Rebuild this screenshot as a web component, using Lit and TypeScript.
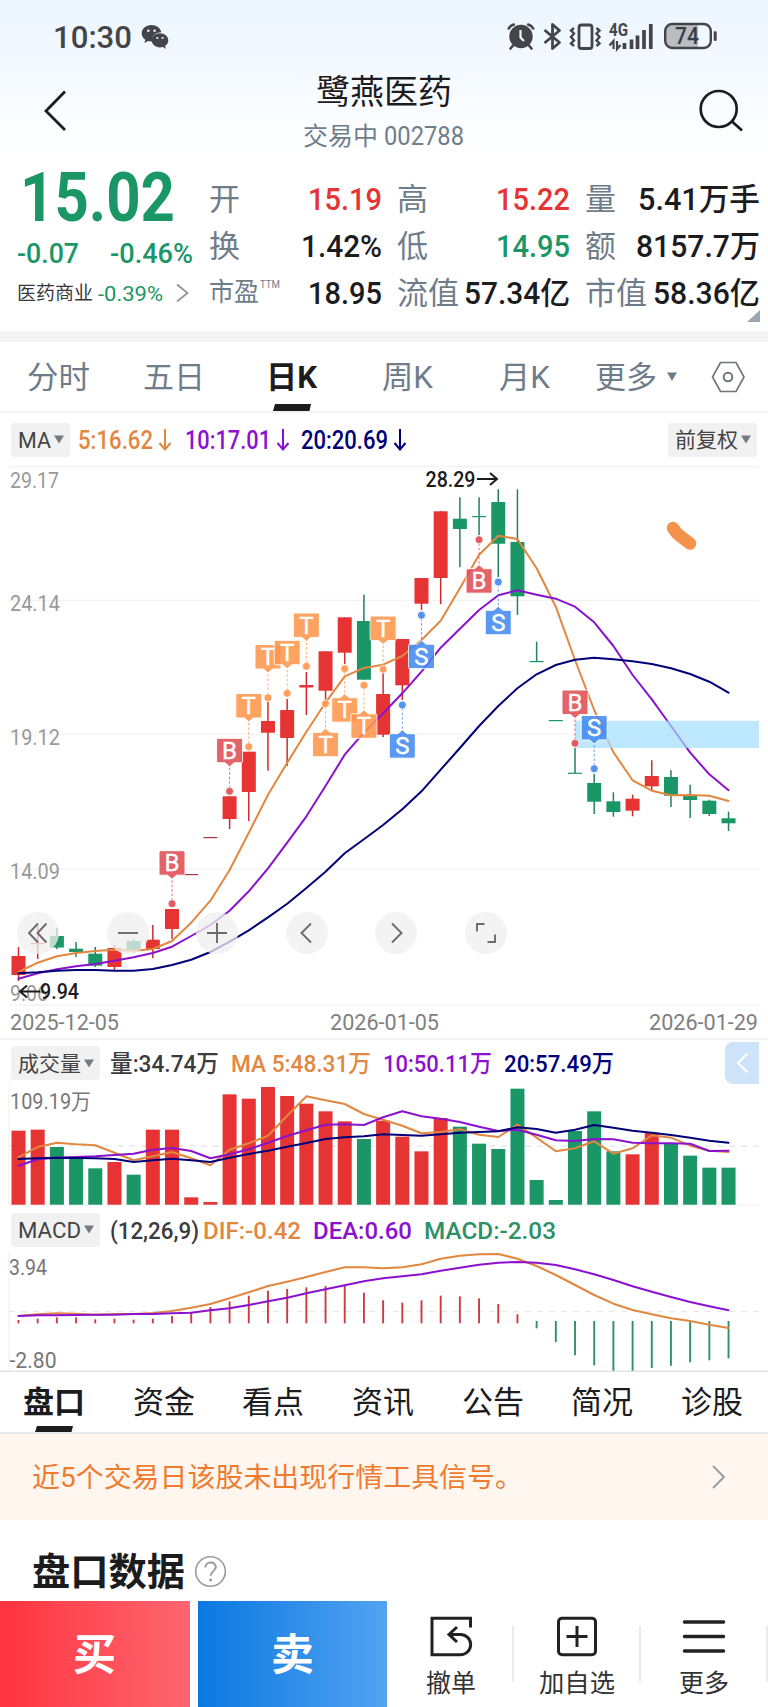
import { LitElement, html, svg, css } from "lit";
import { customElement } from "lit/decorators.js";

const RED = "#e63333";
const GREEN = "#1a9667";
const ORANGE = "#e2873f";
const PURPLE = "#8a12cf";
const NAVY = "#000078";
const INK = "#1c1c1e";
const SLATE = "#6f7d8a";

/** Text run set to an exact advance width. */
const fit = (s: string, w: number, size: number, color = INK, weight = 400) => html`<svg
  class="fit" width=${w} height=${size}><text x="0" y=${size * 0.86} font-size=${size} fill=${color}
  font-weight=${weight} textLength=${w} lengthAdjust="spacingAndGlyphs">${s}</text></svg>`;

const label = (s: string, x: number, y: number, w: number, size: number, color: string, weight = 400) =>
  svg`<text x=${x} y=${y} font-size=${size} fill=${color} font-weight=${weight} textLength=${w} lengthAdjust="spacingAndGlyphs">${s}</text>`;

const cx = (i: number) => 18.5 + 19.19 * i;
const line = (ys: number[], color: string, map = (v: number) => v, w = 2) =>
  svg`<polyline fill="none" stroke=${color} stroke-width=${w} stroke-linejoin="round" stroke-linecap="round"
    points=${ys.map((y, i) => `${cx(i).toFixed(1)},${map(y).toFixed(1)}`).join(" ")} />`;

// [direction, high, body top, body bottom, low]
const candles: [string, number, number, number, number][] = [
  ["r", 947, 956, 975, 981], ["r", 926, 943, 944.2, 959], ["g", 928, 936, 947.5, 949], ["g", 942, 948.7, 952, 957],
  ["g", 947, 953.7, 965.7, 967], ["r", 945, 948, 967, 970], ["g", 939, 941, 951, 953], ["r", 925, 939.7, 949, 958.3],
  ["r", 909, 909, 929, 939], ["r", 874, 874, 875.2, 875], ["r", 837, 837, 838.2, 838], ["r", 796.3, 796.3, 819, 829],
  ["r", 751.7, 751.7, 792, 821], ["r", 702, 721, 732.7, 770.7], ["r", 699, 710, 738, 766], ["r", 672, 685, 687.5, 715],
  ["r", 651.3, 651.3, 690.7, 700], ["r", 617.3, 617.3, 652.7, 664], ["g", 594.7, 621, 679.7, 679.7], ["r", 673, 694, 734.7, 737],
  ["r", 639, 639, 685.3, 700], ["r", 578, 578, 603.7, 610], ["r", 511.3, 511.3, 578, 604], ["g", 497.3, 518.7, 529, 567.3],
  ["g", 497.3, 516, 517.2, 535], ["g", 489.3, 502, 543.7, 577], ["g", 489.3, 542, 596.3, 615], ["g", 641.7, 661, 662.2, 662],
  ["g", 720, 720, 721.2, 721], ["g", 748, 772.7, 773.9, 773], ["g", 774, 783, 801.7, 814], ["g", 792.3, 801.3, 812, 816.7],
  ["r", 794.7, 798.7, 810.7, 816.3], ["r", 760.3, 776, 786.3, 790], ["g", 770.3, 777, 795.7, 807], ["g", 784.7, 796, 800, 818],
  ["g", 799.7, 800.7, 814, 816], ["g", 811.7, 818.3, 823.3, 831],
];
const ma5 = [972, 962.7, 956.3, 953, 951, 949.7, 950.7, 949, 941, 922.7, 900.7, 870, 832.7, 794.7, 762.7, 731.7, 702.7, 676.3, 668, 664.7, 656, 640, 620.7, 588.3, 554.7, 535.7, 539, 568.3, 606.7, 660, 710, 752.3, 780.3, 790.7, 795.3, 795, 795.7, 801];
const ma10 = [978.7, 973.3, 969.3, 966.3, 964, 960.7, 957.3, 953, 946.7, 936, 925, 910.7, 891.3, 868.3, 842.7, 816.3, 786, 754.7, 732.7, 713.3, 693.3, 671.7, 647.7, 628.7, 610, 595.3, 590.3, 594.7, 598.7, 606.7, 622.3, 646, 675, 699.3, 726, 752.7, 774.3, 790.3];
const ma20 = [973.3, 972.3, 970.7, 970, 970, 970.7, 970.7, 969, 965, 959.7, 952, 941.7, 930.3, 917.3, 903.7, 888, 871.7, 853.3, 839.3, 825, 809.3, 791.3, 769.7, 748, 726, 706, 688.3, 674.3, 665, 659.7, 657.7, 659.3, 661.3, 664, 668.3, 674, 681.7, 692.7];

// [letter, candle index, box top, dot y]
const marks: [string, number, number, number][] = [
  ["B", 8, 850.7, 903.7], ["B", 11, 738.3, 791.3], ["T", 12, 693.5, 746.7], ["T", 13, 644.5, 697.7], ["T", 14, 640.3, 693.3],
  ["T", 15, 613, 666.3], ["T", 16, 732.3, 703.7], ["T", 17, 697.7, 668.7], ["T", 18, 713.8, 685.2], ["T", 19, 616, 669.3],
  ["S", 20, 733.7, 705], ["S", 21, 644.2, 615.3], ["B", 24, 568.7, 539.7], ["S", 25, 610.3, 582], ["B", 29, 690, 743.3], ["S", 30, 715.5, 768.7],
];
const markColor: Record<string, string> = { B: "#df4d52", T: "#ff964d", S: "#4289ef" };

// [direction, bar top] in thirds of a pixel below 1040
const volumes: [string, number][] = [
  ["r", 272], ["r", 269], ["g", 321], ["g", 353], ["g", 385], ["r", 366], ["g", 404], ["r", 269], ["r", 269], ["r", 472],
  ["r", 486], ["r", 163], ["r", 176], ["r", 141], ["r", 168], ["r", 191], ["r", 214], ["r", 244], ["g", 297], ["r", 242],
  ["r", 290], ["r", 334], ["r", 234], ["g", 260], ["g", 311], ["g", 327], ["g", 146], ["g", 420], ["g", 480], ["g", 273],
  ["g", 214], ["g", 334], ["r", 343], ["r", 278], ["g", 309], ["g", 347], ["g", 383], ["g", 383],
];
const third = (v: number) => 1040 + v / 3;
const v5 = [352, 321, 308, 313, 316, 338, 361, 349, 336, 355, 376, 329, 310, 287, 227, 169, 181, 192, 222, 239, 257, 280, 276, 268, 284, 291, 254, 293, 334, 325, 304, 341, 325, 286, 293, 317, 332, 336];
const v10 = [377, 358, 353, 351, 349, 345, 341, 329, 324, 333, 355, 343, 328, 308, 288, 271, 254, 253, 255, 232, 214, 229, 236, 246, 260, 273, 269, 284, 301, 303, 297, 298, 308, 310, 310, 311, 333, 332];
const v20 = [357, 355, 353, 354, 355, 357, 366, 361, 356, 361, 366, 353, 342, 332, 320, 309, 297, 292, 289, 283, 285, 287, 283, 278, 276, 274, 262, 267, 278, 269, 255, 263, 272, 278, 285, 293, 302, 308];
const dif = [828, 823, 820, 821, 824, 822, 822, 819, 813, 803, 792, 775, 757, 738, 725, 711, 696, 682, 682, 685, 682, 673, 656, 647, 643, 642, 656, 678, 705, 735, 765, 791, 810, 823, 835, 843, 854, 864];
const dea = [828, 826, 826, 825, 824, 824, 822, 822, 820, 818, 811, 805, 795, 784, 773, 760, 748, 736, 724, 715, 709, 703, 692, 683, 674, 668, 666, 668, 675, 688, 703, 720, 739, 755, 771, 786, 799, 811];
const hist = [840, 836, 832, 832, 838, 836, 839, 836, 828, 818, 801, 784, 767, 752, 747, 742, 738, 736, 758, 781, 788, 781, 767, 769, 775, 792, 823, 865, 906, 946, 976, 992, 992, 984, 977, 967, 961, 955];

const shared = css`
  :host { display: block; font-family: Roboto, "Noto Sans CJK SC", sans-serif; }
  svg { display: block; flex: none; }
  .fit { overflow: visible; }
  text { font-family: Roboto, "Noto Sans CJK SC", sans-serif; white-space: pre; }
`;

@customElement("status-header")
class StatusHeader extends LitElement {
  static styles = [shared, css`
    :host { height: 152px; }
    .status { display: flex; align-items: center; height: 73px; padding: 0 51px 0 53px; box-sizing: border-box; }
    .status .fit { margin-bottom: 2px; }
    .wechat { margin-left: 9px; }
    .right { margin-left: auto; }
    .nav { display: flex; justify-content: space-between; height: 79px; padding: 0 24px 0 43px; }
    .back { margin-top: 17px; }
    .search { margin-top: 15px; }
    .title { display: flex; flex-direction: column; align-items: center; padding-top: 2px; }
    .sub { display: flex; gap: 6px; margin-top: 14px; }
  `];
  render() {
    return html`
      <div class="status">
        ${fit("10:30", 79, 32, "#444549", 500)}
        <svg class="wechat" width="28" height="26" viewBox="0 0 28 26" fill="#444549">
          <path d="M10.500 1C4.800 1 .7 4.700.7 9.300c0 2.700 1.400 4.900 3.700 6.500L3.400 19l3.700-2c1.300.4 2.600.5 4 .4-.9-5 3.500-9.200 9.200-9.200C19.400 4 15.500 1 10.500 1z"/>
          <path d="M19 9.200c-4.700 0-8.300 3.200-8.300 7.100 0 4 3.600 7.100 8.300 7.100 1 0 2-.2 2.900-.4l3 1.900-.8-2.900c2-1.300 3.200-3.400 3.200-5.700 0-3.900-3.600-7.100-8.300-7.100z"/>
          <g fill="#eef5fd"><circle cx="7.300" cy="6.800" r="1.300"/><circle cx="13.600" cy="6.800" r="1.300"/><circle cx="16.300" cy="14" r="1.100"/><circle cx="21.600" cy="14" r="1.100"/></g>
        </svg>
        <svg class="right" width="211" height="30" viewBox="506 22 211 30" fill="none" stroke="#444549">
          <circle cx="521" cy="36.500" r="11.700" fill="#444549" stroke="none"/>
          <path d="M508.800 28.500q1.500-3 5-4M533.200 28.500q-1.500-3-5-4M513 45.500l-2.500 3M529 45.500l2.500 3" stroke-width="2.600" stroke-linecap="round"/>
          <path d="M520.500 30v7.500l3.500 3.500" stroke="#eef5fd" stroke-width="2.200"/>
          <path d="M544.500 30l15 12.500-7 6V24.500l7 6-15 12.500" stroke-width="2.800" stroke-linejoin="round"/>
          <rect x="579" y="25" width="13" height="23.500" rx="2.500" stroke-width="2.800"/>
          <path d="M574 28l-3 2.500 3 3-3 3.500 3 3.500-3 3 3 2.500M596.500 28l3 2.500-3 3 3 3.500-3 3.500 3 3-3 2.500" stroke-width="2.400"/>
          <text x="609" y="36" font-size="18" font-weight="700" fill="#444549" stroke="none" textLength="19" lengthAdjust="spacingAndGlyphs">4G</text>
          <path d="M613.500 49v-8l-4 4.500M617 41v8l3.500-4" stroke-width="2.200"/>
          <path d="M624.500 43v6M631.500 39.500v9.500M637.500 35.500v13.500M644 30v19M650.800 24v25" stroke-width="3.700"/>
          <path d="M673 25h25v22.500h-25q-7 0-7-6v-10.500q0-6 7-6z" fill="#b9bcc1" stroke="none"/>
          <rect x="665.200" y="24" width="45.600" height="24" rx="7" stroke-width="2.400"/>
          <path d="M715.200 32.500v7" stroke-width="3" stroke-linecap="round"/>
          <text x="675" y="44.300" font-size="23.500" font-weight="500" fill="#3b3c40" stroke="none" textLength="24" lengthAdjust="spacingAndGlyphs">74</text>
        </svg>
      </div>
      <div class="nav">
        <svg class="back" width="26" height="42" viewBox="43 90 26 42"><path d="M65 91.500L46 111l19 19" fill="none" stroke="#1c1c1e" stroke-width="2.800"/></svg>
        <div class="title">
          ${fit("鹭燕医药", 136, 34, INK, 400)}
          <div class="sub">${fit("交易中", 75, 25, SLATE)}${fit("002788", 80, 26, SLATE)}</div>
        </div>
        <svg class="search" width="46" height="46" viewBox="698 88 46 46" fill="none" stroke="#1c1c1e" stroke-width="2.700"><circle cx="718.700" cy="109" r="18"/><path d="M731.500 121l10.500 9.500"/></svg>
      </div>`;
  }
}

@customElement("quote-panel")
class QuotePanel extends LitElement {
  static styles = [shared, css`
    :host { height: 179px; }
    .panel { display: flex; height: 179px; }
    .left { width: 210px; box-sizing: border-box; padding: 10px 0 0 17px; flex: none; }
    .left > .fit { margin-left: 3px; }
    .delta { display: flex; gap: 31px; margin-top: 8px; }
    .sector { display: flex; align-items: center; gap: 5px; margin-top: 15px; height: 22px; }
    .chev { margin-left: 7px; }
    .grid { display: grid; grid-template-columns: 173px 173px 175px; grid-template-rows: repeat(3, 47px); column-gap: 15px; padding-top: 22.500px; height: 141px; margin-left: -1px; }
    .cell { display: flex; align-items: center; justify-content: space-between; }
    .cell .label { display: flex; align-items: flex-start; gap: 1px; }
    .corner { align-self: flex-end; margin: 0 8px 9px -13px; }
  `];
  cell(label: unknown, value: unknown) {
    return html`<div class="cell"><span class="label">${label}</span>${value}</div>`;
  }
  render() {
    const c = this.cell;
    return html`<div class="panel">
      <div class="left">
        ${fit("15.02", 155, 69, GREEN, 700)}
        <div class="delta">${fit("-0.07", 62, 28, GREEN, 500)}${fit("-0.46%", 83, 28, GREEN, 500)}</div>
        <div class="sector">${fit("医药商业", 76, 19, "#3a3a3c")}${fit("-0.39%", 65, 21, GREEN)}
          <svg class="chev" width="14" height="20"><path d="M2 1.500L12.500 10 2 18.500" fill="none" stroke="#8b949d" stroke-width="1.700"/></svg></div>
      </div>
      <div class="grid">
        ${c(fit("开", 31, 31, SLATE), fit("15.19", 74, 31, RED, 500))}
        ${c(fit("高", 31, 31, SLATE), fit("15.22", 74, 31, RED, 500))}
        ${c(fit("量", 31, 31, SLATE), fit("5.41万手", 122, 31, INK, 500))}
        ${c(fit("换", 31, 31, SLATE), fit("1.42%", 81, 31, INK, 500))}
        ${c(fit("低", 31, 31, SLATE), fit("14.95", 74, 31, GREEN, 500))}
        ${c(fit("额", 31, 31, SLATE), fit("8157.7万", 124, 31, INK, 500))}
        ${c(html`${fit("市盈", 50, 26, SLATE)}${fit("TTM", 20, 11, SLATE)}`, fit("18.95", 74, 31, INK, 500))}
        ${c(fit("流值", 62, 31, SLATE), fit("57.34亿", 106, 31, INK, 500))}
        ${c(fit("市值", 62, 31, SLATE), fit("58.36亿", 107, 31, INK, 500))}
      </div>
      <svg class="corner" width="13" height="12"><path d="M13 0v12H0z" fill="#9aa5af"/></svg>
    </div>`;
  }
}

@customElement("kline-panel")
class KlinePanel extends LitElement {
  static styles = [shared, css`
    .tabs { display: flex; align-items: center; height: 69px; border-top: 11px solid #f4f4f4; border-bottom: 2px solid #f3f3f3; padding-left: 27px; }
    .t1 { margin-left: 53px; } .t2 { margin-left: 61px; } .t3 { margin-left: 65px; } .t4 { margin-left: 66px; } .t5 { margin-left: 45px; }
    .active { align-self: stretch; display: flex; flex-direction: column; align-items: center; justify-content: space-between; padding-top: 19px; box-sizing: border-box; }
    .tri { margin-left: 10px; } .hex { margin-left: 34px; }
    .row { display: flex; align-items: center; padding: 0 9px 0 11px; box-sizing: border-box; }
    .ma { height: 53px; }
    .badge { display: flex; align-items: center; gap: 3px; height: 34px; box-sizing: border-box; padding: 0 6px 0 7px; background: #f1f1f1; border-radius: 4px; }
    .v { margin-left: 8px; } .arrow { margin-left: 5px; } .v2 { margin-left: 13px; } .v3 { margin-left: 11px; }
    .adj { margin-left: auto; margin-right: 2px; }
    .stage { position: relative; }
    .controls { position: absolute; left: 17px; top: 446px; display: flex; gap: 47.600px; }
    .btn { width: 42px; height: 42px; border-radius: 50%; background: rgba(239,239,239,.76); }
    .dates { height: 34px; justify-content: space-between; border-bottom: 2px solid #f4f4f4; padding-left: 10px; padding-right: 10px; }
    .vol { height: 46px; }
    .macd { height: 47px; }
    .k10 { margin-left: 10px; } .k13 { margin-left: 12px; } .k5 { margin-left: 4px; }
    .fold { margin-left: auto; display: flex; align-items: center; justify-content: center; width: 34px; height: 42px; background: #cce3f9; border-radius: 8px 0 0 8px; }
  `];
  down(color: string) {
    return html`<svg class="arrow" width="14" height="22"><path d="M7 0v20M1.500 14L7 20.500 12.500 14" fill="none" stroke=${color} stroke-width="2"/></svg>`;
  }
  triangle(w = 10) {
    return html`<svg width=${w} height="9"><path d=${`M0 0.500h${w}L${w / 2} 8.500z`} fill="#77797c"/></svg>`;
  }
  mark([k, i, top, dot]: [string, number, number, number]) {
    const x = cx(i), c = markColor[k], above = dot > top, edge = above ? top + 24.500 : top, d = above ? 1 : -1;
    return svg`<path d=${`M${x} ${edge + 5 * d}V${dot}`} stroke=${c} stroke-width="1" stroke-dasharray="2.500 2" opacity=".8"/>
      <circle cx=${x} cy=${dot} r="4" fill=${c} stroke="#fff" stroke-width=".8" opacity=".9"/>
      <path opacity=".87" fill=${c} stroke="#fff" stroke-width="1" d=${above
        ? `M${x - 11.500} ${top}h23q1.500 0 1.500 1.500v21.500q0 1.500-1.500 1.500h-7l-4.500 4-4.500-4h-7q-1.500 0-1.500-1.500v-21.500q0-1.500 1.500-1.500z`
        : `M${x - 11.500} ${top + 24.500}h23q1.500 0 1.500-1.500v-21.500q0-1.500-1.500-1.500h-7l-4.500-4-4.500 4h-7q-1.500 0-1.500 1.500v21.500q0 1.500 1.500 1.500z`}/>
      <text x=${x} y=${top + 20.500} font-size="24" font-weight="400" fill="#fff" stroke="#fff" stroke-width=".4" text-anchor="middle">${k}</text>`;
  }
  priceChart() {
    return html`<svg width="768" height="540" viewBox="0 466 768 540">
      ${[466.500, 600.500, 734.500, 869, 1005].map((y) => svg`<path d=${`M9 ${y}H759`} stroke="#f3f3f3" stroke-width="1.400"/>`)}
      ${label("29.17", 10, 487.500, 49, 22, "#999")}${label("24.14", 10, 610.500, 50, 22, "#999")}
      ${label("19.12", 10, 744.500, 50, 22, "#999")}${label("14.09", 10, 878.500, 50, 22, "#999")}${label("9.06", 10, 1001, 38, 22, "#999")}
      ${candles.map(([k, h, t, b, l], i) => {
        const c = k === "r" ? RED : GREEN, flat = b - t < 1.500 && k === "r" && l - h < 3;
        return svg`<path d=${`M${cx(i)} ${h}V${l}`} stroke=${k === "r" ? "#cf2b2f" : "#238060"} stroke-width="1.500"/>
          <rect x=${cx(i) - 7} y=${t} width="14" height=${b - t} fill=${flat ? "#a83a3e" : c}/>`;
      })}
      ${line(ma5, ORANGE)}${line(ma10, PURPLE)}${line(ma20, NAVY)}
      <rect x="575" y="720.700" width="184" height="27.300" fill="rgba(162,222,255,.7)"/>
      ${marks.map((m) => this.mark(m))}
      <path d="M673 528q3 5 7 8t10 7.500" fill="none" stroke="#f5924a" stroke-width="12.500" stroke-linecap="round"/>
      ${label("28.29", 425.500, 486.500, 50, 22, INK, 500)}
      <path d="M477 479h20M490 473l7 6-7 6" fill="none" stroke="#1c1c1e" stroke-width="2"/>
      ${label("9.94", 40, 998.500, 39, 22, INK, 500)}
      <path d="M40 991.500H20M27 985.500l-7 6 7 6" fill="none" stroke="#1c1c1e" stroke-width="2"/>
    </svg>`;
  }
  controls() {
    const icons = ["M21 11.500l-9 9.500 9 9.500M29.500 11.500l-9 9.500 9 9.500", "M11 21h20", "M11 21h20M21 11v20", "M25 11.500L15.500 21l9.500 9.500", "M17 11.500l9.500 9.500-9.500 9.500", "M12 19.500v-7.500h7.500M30 22.500v7.500h-7.500"];
    return html`<div class="controls">${icons.map((d) => html`<div class="btn"><svg width="42" height="42"><path d=${d} fill="none" stroke="#6b6b6b" stroke-width="1.900"/></svg></div>`)}</div>`;
  }
  volumeChart() {
    return html`<svg width="768" height="120" viewBox="0 1086 768 120">
      <path d="M9 1087V1205H759" fill="none" stroke="#f3f3f3" stroke-width="1.400"/>
      <path d="M9 1146H759" stroke="#e9e9e9" stroke-width="1.400" stroke-dasharray="6 6"/>
      ${label("109.19万", 10, 1109, 81, 22, "#777")}
      ${volumes.map(([k, v], i) => svg`<rect x=${cx(i) - 7} y=${third(v)} width="14" height=${1204.700 - third(v)} fill=${k === "r" ? RED : GREEN}/>`)}
      ${line(v5, ORANGE, third)}${line(v10, PURPLE, third)}${line(v20, NAVY, third)}
    </svg>`;
  }
  macdChart() {
    return html`<svg width="768" height="119" viewBox="0 1253 768 119">
      <path d="M9 1253V1371" stroke="#f3f3f3" stroke-width="1.400"/>
      <path d="M9 1311.500H759" stroke="#e9e9e9" stroke-width="1.400" stroke-dasharray="6 6"/>
      ${label("3.94", 9, 1275, 38, 22, "#777")}${label("-2.80", 9.500, 1368, 47, 22, "#777")}
      <path d="M0 1371.500H768" stroke="#dfdfe1" stroke-width="1.400"/>
      ${hist.map((v, i) => svg`<path d=${`M${cx(i)} ${third(v)}V${i < 27 ? 1323.300 : 1321}`} stroke=${i < 27 ? "#cf3b3b" : "#2f9068"} stroke-width="1.900"/>`)}
      ${line(dif, ORANGE, third)}${line(dea, PURPLE, third)}
    </svg>`;
  }
  render() {
    return html`
      <div class="tabs">
        <span>${fit("分时", 63, 31, SLATE)}</span>
        <span class="t1">${fit("五日", 62, 31, SLATE)}</span>
        <span class="t2 active">${fit("日K", 51, 31, INK, 700)}<svg width="38" height="7"><path d="M2 0h36l-1.500 7H0z" fill="#1c1c1e"/></svg></span>
        <span class="t3">${fit("周K", 51, 31, SLATE)}</span>
        <span class="t4">${fit("月K", 51, 31, SLATE)}</span>
        <span class="t5">${fit("更多", 62, 31, SLATE)}</span>
        <span class="tri"><svg width="10" height="9"><path d="M0 .5h10L5 9z" fill="#6f7d8a"/></svg></span>
        <svg class="hex" width="34" height="32" viewBox="0 0 34 32" fill="none" stroke="#707478"><path d="M9.500 1.500h15.500l8 14.500-8 14.500H9.500L1.500 16z" stroke-width="1.700"/><circle cx="17" cy="16" r="4.300" stroke-width="2"/></svg>
      </div>
      <div class="row ma">
        <span class="badge">${fit("MA", 33, 22, "#444")}${this.triangle()}</span>
        <span class="v">${fit("5:16.62", 75, 25, ORANGE, 500)}</span>${this.down(ORANGE)}
        <span class="v2">${fit("10:17.01", 86, 25, PURPLE, 500)}</span>${this.down(PURPLE)}
        <span class="v3">${fit("20:20.69", 87, 25, NAVY, 500)}</span>${this.down(NAVY)}
        <span class="badge adj">${fit("前复权", 63, 21, "#444")}${this.triangle()}</span>
      </div>
      <div class="stage">${this.priceChart()}${this.controls()}</div>
      <div class="row dates">${fit("2025-12-05", 109, 22, "#808080")}${fit("2026-01-05", 109, 22, "#808080")}${fit("2026-01-29", 109, 22, "#808080")}</div>
      <div class="row vol">
        <span class="badge">${fit("成交量", 63, 21, "#444")}${this.triangle()}</span>
        <span class="k10">${fit("量:34.74万", 109, 24, "#3b3b3d", 500)}</span>
        <span class="k13">${fit("MA 5:48.31万", 140, 24, ORANGE, 500)}</span>
        <span class="k13">${fit("10:50.11万", 109, 24, PURPLE, 500)}</span>
        <span class="k13">${fit("20:57.49万", 110, 24, NAVY, 500)}</span>
        <span class="fold"><svg width="14" height="24"><path d="M12.500 2.500L3 12l9.500 9.500" fill="none" stroke="#fff" stroke-width="2.300"/></svg></span>
      </div>
      ${this.volumeChart()}
      <div class="row macd">
        <span class="badge">${fit("MACD", 63, 22, "#444")}${this.triangle()}</span>
        <span class="k10">${fit("(12,26,9)", 89, 24, "#3b3b3d", 500)}</span>
        <span class="k5">${fit("DIF:-0.42", 98, 24, ORANGE, 500)}</span>
        <span class="k13">${fit("DEA:0.60", 99, 24, PURPLE, 500)}</span>
        <span class="k13">${fit("MACD:-2.03", 132, 24, "#2f9068", 500)}</span>
      </div>
      ${this.macdChart()}`;
  }
}

@customElement("info-footer")
class InfoFooter extends LitElement {
  static styles = [shared, css`
    .tabs { display: flex; justify-content: space-between; padding: 14px 25px 0 23px; height: 62px; box-sizing: border-box; border-bottom: 2px solid #e7e7e9; }
    .on { display: flex; flex-direction: column; align-items: center; justify-content: space-between; }
    .notice { display: flex; align-items: center; justify-content: space-between; height: 86px; padding: 0 42px 0 32px; background: #fff6f0; }
    .head { display: flex; align-items: center; gap: 9px; height: 81px; padding: 21px 0 0 32px; box-sizing: border-box; }
    .bar { display: flex; height: 106px; }
    .act { display: flex; align-items: center; justify-content: center; width: 190px; }
    .buy { background: linear-gradient(90deg, #ff3440, #ff6670); margin-right: 8px; }
    .sell { background: linear-gradient(90deg, #0a78e0, #53a3f1); }
    .tool { display: flex; flex-direction: column; align-items: center; justify-content: space-between; width: 126px; padding: 14px 0 12px; height: 80px; }
    .rule { width: 2px; height: 56px; margin-top: 25px; background: #ebebeb; flex: none; }
    .first { width: 122px; padding-left: 3px; }
    .last { width: 125px; }
  `];
  render() {
    return html`
      <div class="tabs">
        <span class="on">${fit("盘口", 62, 31, INK, 700)}<svg width="38" height="6"><path d="M2 0h36l-1.500 6H0z" fill="#1c1c1e"/></svg></span>
        ${["资金", "看点", "资讯", "公告", "简况", "诊股"].map((s) => fit(s, 62, 31, INK))}
      </div>
      <div class="notice">${fit("近5个交易日该股未出现行情工具信号。", 491, 27.500, "#ee7b2e")}
        <svg width="15" height="26"><path d="M2 2l11 11L2 24" fill="none" stroke="#969ca4" stroke-width="1.900"/></svg></div>
      <div class="head">${fit("盘口数据", 153, 38, INK, 700)}
        <svg width="33" height="33"><circle cx="16.500" cy="16.500" r="14.800" fill="none" stroke="#9a9a9c" stroke-width="1.600"/><path d="M11.300 12.500c.3-6.500 10.500-6.500 10.600-.5 0 4-5.300 4.300-5.300 8.800" fill="none" stroke="#9a9a9c" stroke-width="1.900"/><circle cx="16.600" cy="25" r="1.500" fill="#9a9a9c"/></svg></div>
      <div class="bar">
        <div class="act buy">${fit("买", 43, 43, "#fff", 700)}</div>
        <div class="act sell">${fit("卖", 43, 43, "#fff", 700)}</div>
        <div class="tool first"><svg width="44" height="42" viewBox="0 0 44 42" fill="none" stroke="#222" stroke-width="3"><path d="M41.500 12.500V3.200H3v36.500H31.500a10.100 10.100 0 0 0 0-20.300H20M28 12l-8 7.400L28 27"/></svg>${fit("撤单", 50, 25, "#333")}</div>
        <div class="rule"></div>
        <div class="tool"><svg width="42" height="42" fill="none" stroke="#222" stroke-width="3"><rect x="2.500" y="3.200" width="37" height="36.500" rx="3.500"/><path d="M10.500 21.500h21M21 11v21"/></svg>${fit("加自选", 76, 25, "#333")}</div>
        <div class="rule"></div>
        <div class="tool last"><svg width="44" height="42" stroke="#222" stroke-width="3.600" stroke-linecap="round"><path d="M2.500 7h39M2.500 21.500h39M2.500 36h39"/></svg>${fit("更多", 50, 25, "#333")}</div>
        <div class="rule"></div>
      </div>`;
  }
}

@customElement("app-root")
class AppRoot extends LitElement {
  static styles = css`
    :host { display: block; width: 768px; height: 1707px; overflow: hidden; background: linear-gradient(#ecf5ff 0, #ffffff 160px); }
  `;
  render() {
    return html`<status-header></status-header><quote-panel></quote-panel><kline-panel></kline-panel><info-footer></info-footer>`;
  }
}
